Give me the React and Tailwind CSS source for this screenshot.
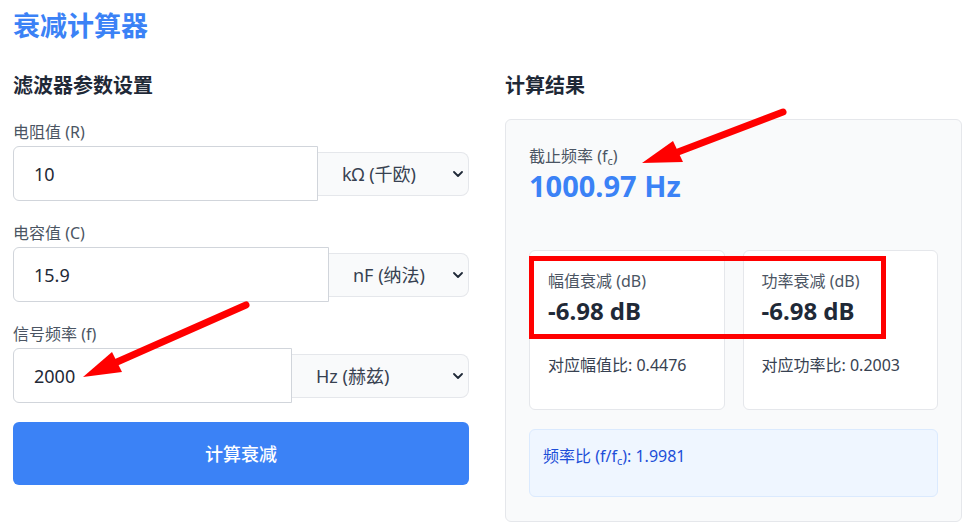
import { useState } from "react";

const font = { fontFamily: '"Noto Sans", "Noto Sans CJK SC", sans-serif' };

function Chevron() {
  return (
    <svg className="pointer-events-none absolute right-[6px] top-1/2 -translate-y-1/2" width="10" height="6" viewBox="0 0 10 6" fill="none">
      <path d="M1 1l4 4 4-4" stroke="#1f2937" strokeWidth="1.8" strokeLinecap="round" strokeLinejoin="round" />
    </svg>
  );
}

function Field({ label, value, unit, options, selectW, className }) {
  const [val, setVal] = useState(value);
  return (
    <div className={className}>
      <label className="block text-base leading-6 text-[#4b5563] mb-[2px]">{label}</label>
      <div className="flex items-center">
        <input
          className="flex-1 min-w-0 h-[55px] pl-5 text-lg text-[#1f2937] bg-white border border-[#d1d5db] rounded-l-md outline-none"
          value={val}
          onChange={(e) => setVal(e.target.value)}
        />
        <div className={"relative " + selectW}>
          <select
            defaultValue={unit}
            className="appearance-none w-full h-[44px] pl-6 pr-6 text-lg text-[#374151] bg-[#f9fafb] border border-l-0 border-[#e5e7eb] rounded-r-lg outline-none"
          >
            {options.map((o) => (
              <option key={o}>{o}</option>
            ))}
          </select>
          <Chevron />
        </div>
      </div>
    </div>
  );
}

function Annotations() {
  return (
    <svg className="pointer-events-none absolute left-0 top-0" width="972" height="529" viewBox="0 0 972 529">
      {/* arrow to cutoff freq */}
      <line x1="783" y1="112" x2="678" y2="152" stroke="#ff0000" strokeWidth="7" strokeLinecap="round" />
      <polygon points="642,163 673,141 683,162" fill="#ff0000" />
      {/* arrow to signal freq */}
      <line x1="246" y1="305" x2="117" y2="362" stroke="#ff0000" strokeWidth="7" strokeLinecap="round" />
      <polygon points="83,377 112,352 122,372" fill="#ff0000" />
      {/* box around attenuation values */}
      <rect x="531.5" y="258.5" width="352" height="78" fill="none" stroke="#ff0000" strokeWidth="5" />
    </svg>
  );
}

export default function App() {
  return (
    <div className="relative w-[972px] h-[529px] overflow-hidden bg-white" style={font}>
      <div className="pl-[13px] pt-2">
        <h1 className="text-[27px] leading-[35px] font-bold text-[#3b82f6] mb-[29px]">衰减计算器</h1>

        <div className="grid grid-cols-[456px_457px] gap-[36px]">
          {/* Left: inputs */}
          <section>
            <h2 className="text-xl leading-7 font-bold text-[#1f2937] mb-5">滤波器参数设置</h2>
            <Field label="电阻值 (R)" value="10" unit="kΩ (千欧)" options={["Ω (欧姆)", "kΩ (千欧)", "MΩ (兆欧)"]} selectW="w-[151px]" />
            <Field className="mt-5" label="电容值 (C)" value="15.9" unit="nF (纳法)" options={["pF (皮法)", "nF (纳法)", "μF (微法)"]} selectW="w-[140px]" />
            <Field className="mt-5" label="信号频率 (f)" value="2000" unit="Hz (赫兹)" options={["Hz (赫兹)", "kHz (千赫兹)", "MHz (兆赫兹)"]} selectW="w-[177px]" />
            <button className="mt-[19px] w-full h-[63px] rounded-md bg-[#3b82f6] text-white text-lg font-medium">计算衰减</button>
          </section>

          {/* Right: results */}
          <section>
            <h2 className="text-xl leading-7 font-bold text-[#1f2937] mb-[19px]">计算结果</h2>
            <div className="bg-[#f9fafb] border border-[#e5e7eb] rounded-md px-[23px] py-6">
              <div className="text-base leading-6 text-[#4b5563]">
                截止频率 (f<sub className="text-[11px] leading-none">c</sub>)
              </div>
              <div className="text-[29px] leading-9 font-bold text-[#3b82f6]">1000.97 Hz</div>

              <div className="mt-[46px] grid grid-cols-2 gap-[18px]">
                <div className="h-[160px] bg-white border border-[#e5e7eb] rounded-md p-[18px]">
                  <div className="text-base leading-6 text-[#4b5563]">幅值衰减 (dB)</div>
                  <div className="mt-[2px] text-2xl leading-8 font-bold text-[#1f2937]">-6.98 dB</div>
                  <div className="mt-[26px] text-base leading-6 text-[#374151]">对应幅值比: 0.4476</div>
                </div>
                <div className="h-[160px] bg-white border border-[#e5e7eb] rounded-md p-[18px]">
                  <div className="text-base leading-6 text-[#4b5563]">功率衰减 (dB)</div>
                  <div className="mt-[2px] text-2xl leading-8 font-bold text-[#1f2937]">-6.98 dB</div>
                  <div className="mt-[26px] text-base leading-6 text-[#374151]">对应功率比: 0.2003</div>
                </div>
              </div>

              <div className="mt-[19px] h-[68px] bg-[#eff6ff] border border-[#dbeafe] rounded-md px-[13px] pt-[14px] text-base leading-6 text-[#1d4ed8]">
                频率比 (f/f<sub className="text-[11px] leading-none">c</sub>): 1.9981
              </div>
            </div>
          </section>
        </div>
      </div>
      <Annotations />
    </div>
  );
}
